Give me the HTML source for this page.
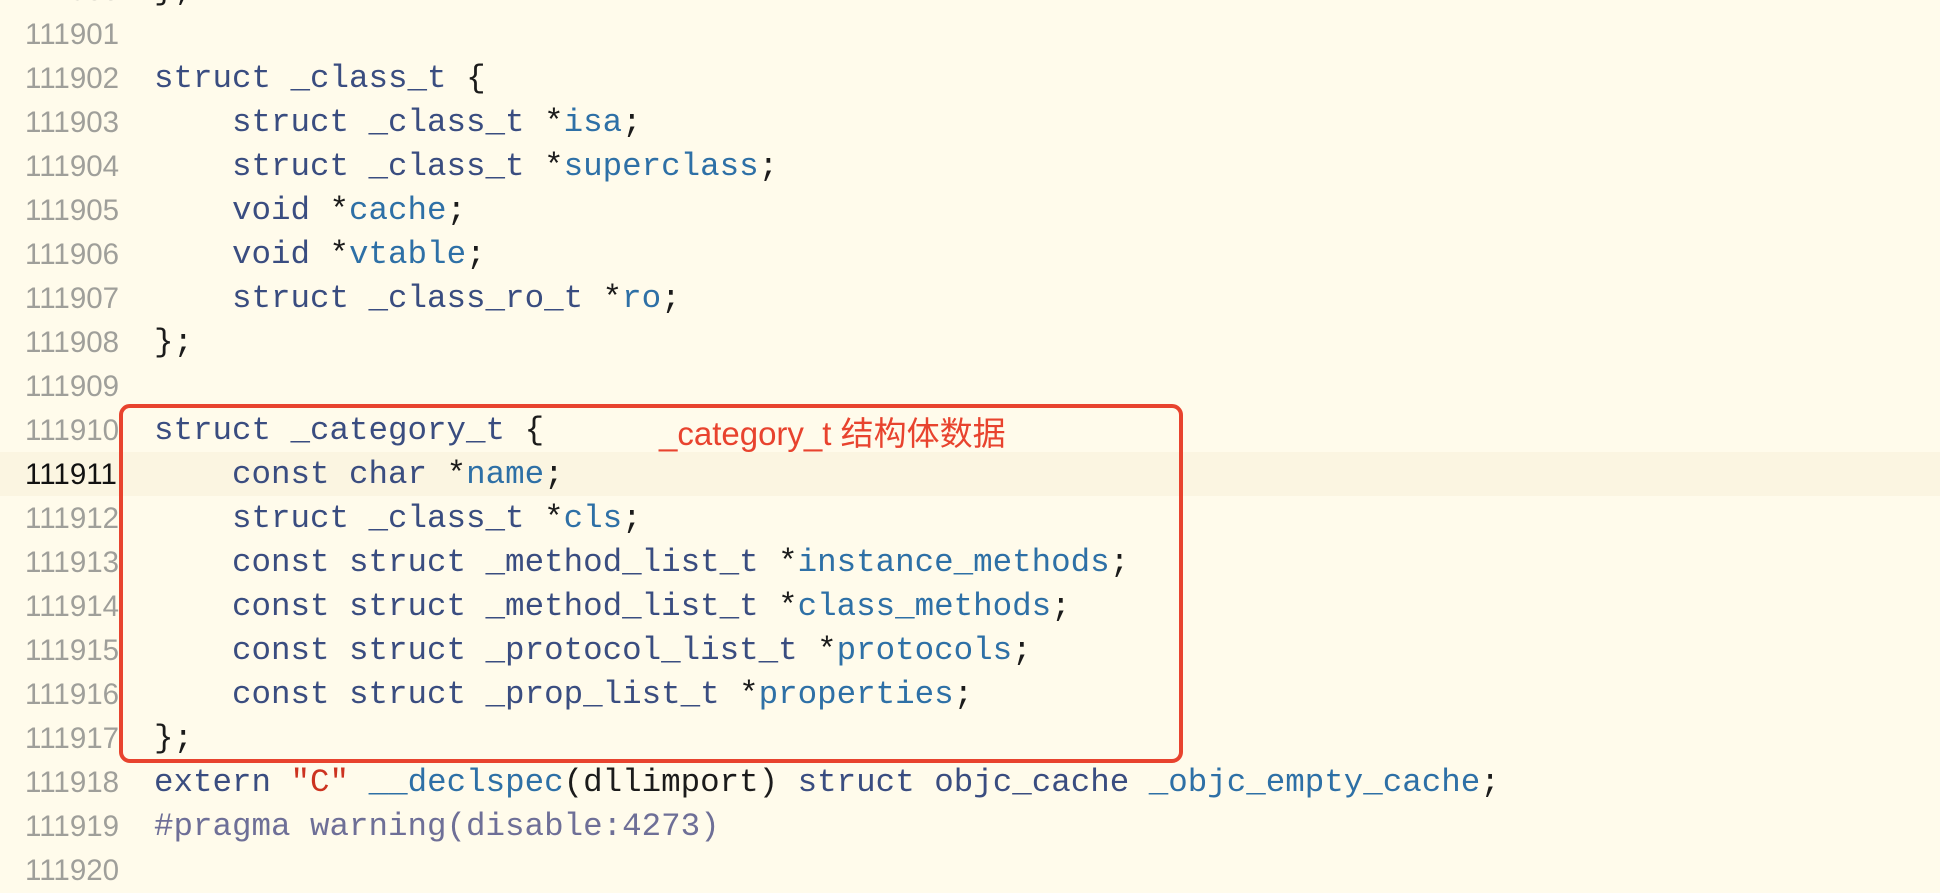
<!DOCTYPE html>
<html><head><meta charset="utf-8"><style>
html,body{margin:0;padding:0;}
body{width:1940px;height:872px;background:#fffbeb;position:relative;overflow:hidden;}
.hl{position:absolute;left:0;top:452px;width:1940px;height:44px;background:#fbf5e1;}
.n{position:absolute;left:25px;width:120px;height:44px;line-height:44px;font-family:"Liberation Sans",sans-serif;font-size:29.5px;color:#9f9f9a;white-space:pre;}
.c{position:absolute;left:154px;height:44px;line-height:44px;font-family:"Liberation Mono",monospace;font-size:32.5px;color:#1b1b1b;white-space:pre;}
.k{color:#3a4d80}.f{color:#2e70a6}.s{color:#cc3320}.p{color:#6e6f97}
.box{position:absolute;left:119px;top:404px;width:1056px;height:351px;border:4px solid #e8432e;border-radius:11px;}
.ann{position:absolute;left:659px;top:412px;font-family:"Liberation Sans","Noto Sans CJK SC",sans-serif;font-size:33px;line-height:44px;color:#e8432e;white-space:pre;}
</style></head><body>
<div class="hl"></div>
<div class="n" style="top:-31px">111900</div><div class="c" style="top:-31px">};</div>
<div class="n" style="top:13px">111901</div>
<div class="n" style="top:57px">111902</div><div class="c" style="top:57px"><span class="k">struct _class_t</span> {</div>
<div class="n" style="top:101px">111903</div><div class="c" style="top:101px">    <span class="k">struct _class_t</span> *<span class="f">isa</span>;</div>
<div class="n" style="top:145px">111904</div><div class="c" style="top:145px">    <span class="k">struct _class_t</span> *<span class="f">superclass</span>;</div>
<div class="n" style="top:189px">111905</div><div class="c" style="top:189px">    <span class="k">void</span> *<span class="f">cache</span>;</div>
<div class="n" style="top:233px">111906</div><div class="c" style="top:233px">    <span class="k">void</span> *<span class="f">vtable</span>;</div>
<div class="n" style="top:277px">111907</div><div class="c" style="top:277px">    <span class="k">struct _class_ro_t</span> *<span class="f">ro</span>;</div>
<div class="n" style="top:321px">111908</div><div class="c" style="top:321px">};</div>
<div class="n" style="top:365px">111909</div>
<div class="n" style="top:409px">111910</div><div class="c" style="top:409px"><span class="k">struct _category_t</span> {</div>
<div class="n" style="top:453px;color:#111">111911</div><div class="c" style="top:453px">    <span class="k">const char</span> *<span class="f">name</span>;</div>
<div class="n" style="top:497px">111912</div><div class="c" style="top:497px">    <span class="k">struct _class_t</span> *<span class="f">cls</span>;</div>
<div class="n" style="top:541px">111913</div><div class="c" style="top:541px">    <span class="k">const struct _method_list_t</span> *<span class="f">instance_methods</span>;</div>
<div class="n" style="top:585px">111914</div><div class="c" style="top:585px">    <span class="k">const struct _method_list_t</span> *<span class="f">class_methods</span>;</div>
<div class="n" style="top:629px">111915</div><div class="c" style="top:629px">    <span class="k">const struct _protocol_list_t</span> *<span class="f">protocols</span>;</div>
<div class="n" style="top:673px">111916</div><div class="c" style="top:673px">    <span class="k">const struct _prop_list_t</span> *<span class="f">properties</span>;</div>
<div class="n" style="top:717px">111917</div><div class="c" style="top:717px">};</div>
<div class="n" style="top:761px">111918</div><div class="c" style="top:761px"><span class="k">extern</span> <span class="s">"C"</span> <span class="f">__declspec</span>(dllimport) <span class="k">struct objc_cache</span> <span class="f">_objc_empty_cache</span>;</div>
<div class="n" style="top:805px">111919</div><div class="c" style="top:805px"><span class="p">#pragma warning(disable:4273)</span></div>
<div class="n" style="top:849px">111920</div>
<div class="box"></div>
<div class="ann">_category_t 结构体数据</div>
</body></html>
